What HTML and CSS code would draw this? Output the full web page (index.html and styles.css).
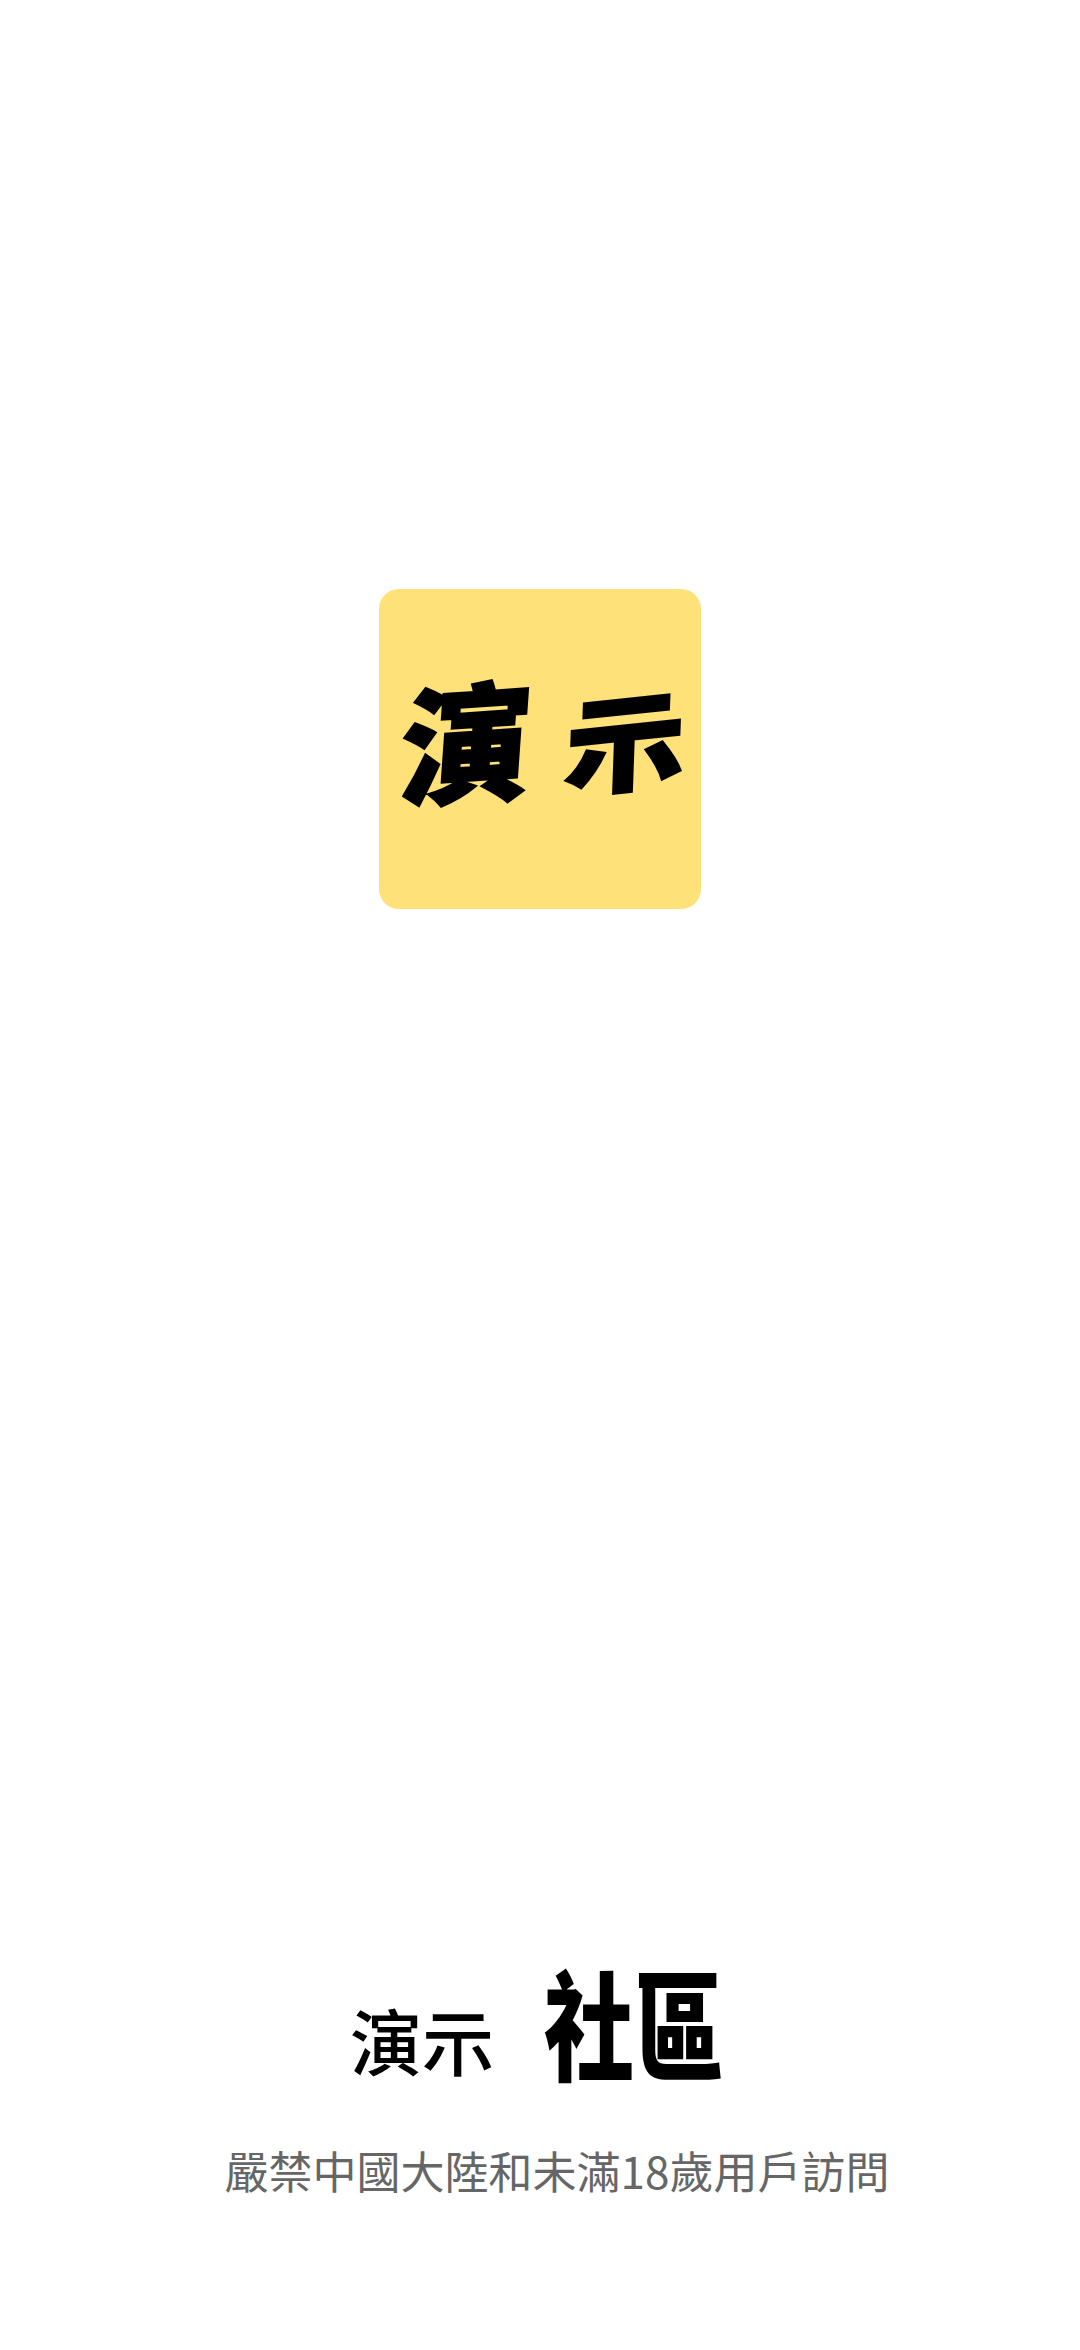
FILE: index.html
```html
<!DOCTYPE html>
<html lang="zh-Hant">
<head>
    <meta charset="UTF-8">
    <meta name="viewport" content="width=device-width, initial-scale=1.0">
    <title>演示社區</title>
    <link rel="stylesheet" href="styles.css">
</head>
<body>
    <div class="splash">
        <div class="logo">
            <span class="logo-char logo-char-big">演</span>
            <span class="logo-char logo-char-small">示</span>
        </div>
        <div class="footer">
            <div class="brand">
                <span class="brand-plain">演示</span>
                <span class="brand-bold">社區</span>
            </div>
            <div class="notice">嚴禁中國大陸和未滿18歲用戶訪問</div>
        </div>
    </div>
</body>
</html>
```

FILE: styles.css
```css
html, body {
    margin: 0;
    padding: 0;
    background-color: #fff;
}

.splash {
    height: 2350px;
    padding-top: 589px;
    box-sizing: border-box;
    display: flex;
    flex-direction: column;
    align-items: center;
    overflow: hidden;
    font-family: "Noto Sans CJK TC", "Noto Sans", sans-serif;
}

.logo {
    width: 322px;
    height: 320px;
    background-color: #ffe17a;
    border-radius: 20px;
    display: flex;
    justify-content: center;
    align-items: center;
    gap: 40px;
    padding-bottom: 24px;
    box-sizing: border-box;
    color: #000;
    font-weight: 900;
    line-height: 1;
}

.logo-char {
    display: block;
    -webkit-text-stroke: 2px #000;
}

.logo-char-big {
    font-size: 130px;
    transform: skewX(-8deg) rotate(-4deg);
}

.logo-char-small {
    font-size: 106px;
    transform: skewX(-8deg) rotate(-6deg) scaleX(1.12);
}

.footer {
    margin-top: auto;
    padding-bottom: 148px;
    display: flex;
    flex-direction: column;
    align-items: center;
}

.brand {
    display: flex;
    align-items: flex-end;
    gap: 50px;
    color: #000;
    line-height: 1;
    margin-left: -6px;
}

.brand-plain {
    font-size: 72px;
    font-weight: 500;
    margin-bottom: 5px;
}

.brand-bold {
    font-size: 90px;
    font-weight: 900;
    display: block;
    transform: scaleY(1.32);
    transform-origin: bottom;
}

.notice {
    margin-top: 58px;
    margin-left: 34px;
    font-size: 44px;
    font-weight: 400;
    line-height: 64px;
    color: #666;
    white-space: nowrap;
}
```
